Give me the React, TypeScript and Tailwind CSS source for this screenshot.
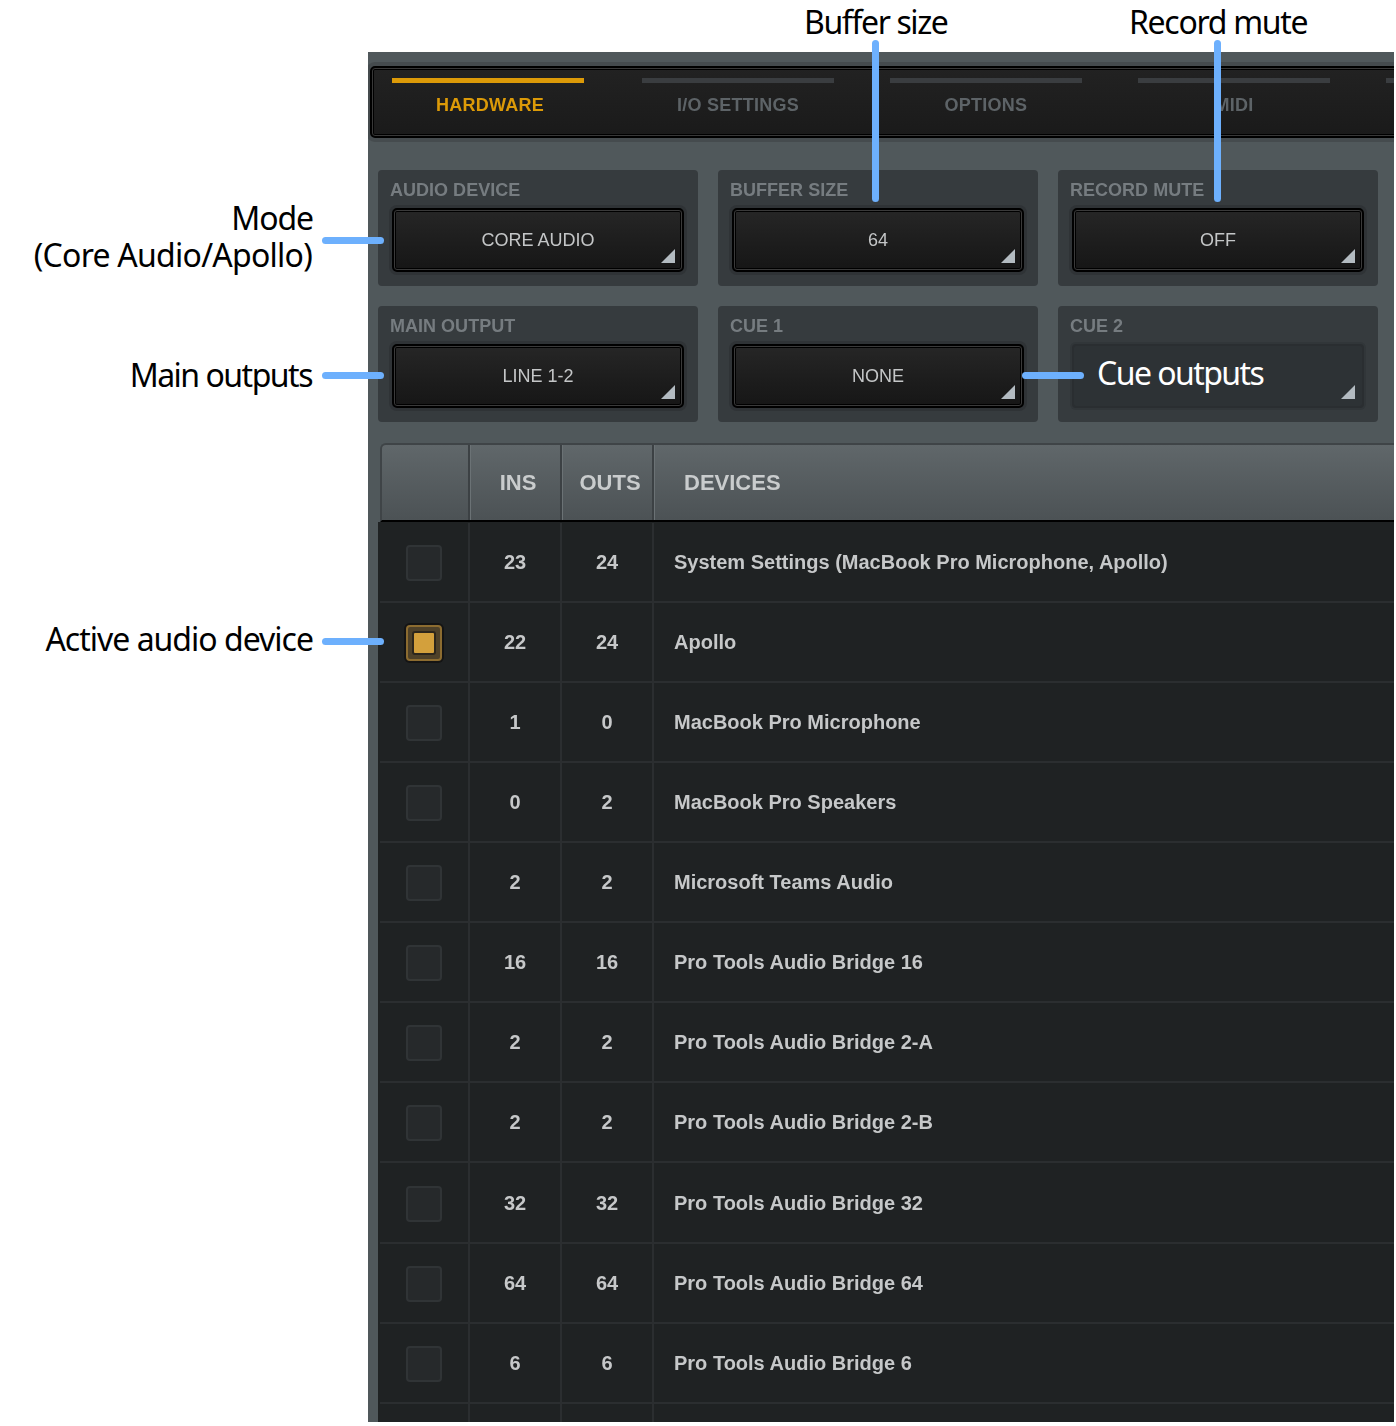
const rows = [
  ["23", "24", "System Settings (MacBook Pro Microphone, Apollo)"],
  ["22", "24", "Apollo"],
  ["1", "0", "MacBook Pro Microphone"],
  ["0", "2", "MacBook Pro Speakers"],
  ["2", "2", "Microsoft Teams Audio"],
  ["16", "16", "Pro Tools Audio Bridge 16"],
  ["2", "2", "Pro Tools Audio Bridge 2-A"],
  ["2", "2", "Pro Tools Audio Bridge 2-B"],
  ["32", "32", "Pro Tools Audio Bridge 32"],
  ["64", "64", "Pro Tools Audio Bridge 64"],
  ["6", "6", "Pro Tools Audio Bridge 6"],
  ["", "", ""],
];

const tabs = ["HARDWARE", "I/O SETTINGS", "OPTIONS", "MIDI", ""];

function Corner() {
  return (
    <svg className="absolute right-[7px] bottom-[7px]" width="14" height="14" viewBox="0 0 14 14">
      <polygon points="14,0 14,14 0,14" fill="#b3bbc1" />
    </svg>
  );
}

function Select({ label, value, faded }: { label: string; value: string; faded?: boolean }) {
  return (
    <div className="w-[320px] h-[116px] shrink-0 rounded-[4px] bg-[#363b3e] px-[12px] pt-[8px]">
      <div className="h-[24px] text-[18px] leading-[24px] font-bold tracking-[0.02px] text-[#767c80]">{label}</div>
      {faded ? (
        <div className="relative mt-[6px] ml-[2px] h-[64px] w-[292px] rounded-[4px] border-2 border-[#2a2e31] bg-[#2d3235] shadow-[0_0_0_2px_#313639] flex items-center justify-center text-[18px] text-[#383d40]">
          {value}
          <Corner />
        </div>
      ) : (
        <div className="relative mt-[6px] ml-[2px] h-[64px] w-[292px] rounded-[5px] border-2 border-black bg-gradient-to-b from-[#262626] to-[#161616] shadow-[0_0_0_3px_#2f3336,inset_0_0_0_1px_#3a3a3a,inset_0_0_0_2px_#000000] flex items-center justify-center text-[18px] text-[#c4c6c7]">
          {value}
          <Corner />
        </div>
      )}
    </div>
  );
}

function Check({ on }: { on: boolean }) {
  if (on) {
    return (
      <div className="w-[36px] h-[36px] rounded-[4px] border-2 border-[#8c6c30] bg-[#4e4129] shadow-[0_0_0_2px_#141414] flex items-center justify-center">
        <div className="w-[24px] h-[24px] rounded-[3px] border-2 border-[#2c261c] bg-[#d3a03c]" />
      </div>
    );
  }
  return <div className="w-[36px] h-[36px] rounded-[4px] border-2 border-[#303436] bg-[#26292b]" />;
}

function Line({ className }: { className: string }) {
  return <div className={"absolute rounded-full bg-[#6db0fd] " + className} />;
}

function Note({ className, children }: { className: string; children: React.ReactNode }) {
  return (
    <div className={"absolute whitespace-nowrap text-[32px] leading-[38px] text-black " + className}>
      {children}
    </div>
  );
}

export default function App() {
  return (
    <div className="relative w-[1394px] h-[1422px] overflow-hidden bg-white font-['Liberation_Sans',Arial,sans-serif]">
      <div className="ml-[368px] mt-[52px] h-[1370px] w-[1026px] overflow-hidden bg-[#50585b]">
        <div className="blur-[0.35px]">
          <div className="relative top-[14px] ml-[2px] w-[1100px] h-[72px] rounded-[5px] border-2 border-black bg-gradient-to-b from-[#222222] to-[#1a1a1a] shadow-[0_0_0_4px_#454b4e,inset_0_0_0_1px_#383838,inset_0_0_0_2px_#000000]">
            <div className="flex pl-[20px] pt-[10px]">
              {tabs.map((t, i) => (
                <div key={i} className={"w-[192px] shrink-0 text-center " + (i === 0 ? "mr-[58px]" : "mr-[56px]")}>
                  <div className={"h-[5px] " + (i === 0 ? "bg-[#dc9a08]" : "bg-[#3a3d40]")} />
                  <div className={"mt-[10px] text-[18px] leading-[24px] font-bold tracking-[0.25px] " + (i === 0 ? "pl-[4px] text-[#dc9a08]" : "text-[#5d6367]")}>{t}</div>
                </div>
              ))}
            </div>
          </div>

          <div className="mt-[46px] ml-[10px] flex flex-col gap-[20px]">
            <div className="flex gap-[20px]">
              <Select label="AUDIO DEVICE" value="CORE AUDIO" />
              <Select label="BUFFER SIZE" value="64" />
              <Select label="RECORD MUTE" value="OFF" />
            </div>
            <div className="flex gap-[20px]">
              <Select label="MAIN OUTPUT" value="LINE 1-2" />
              <Select label="CUE 1" value="NONE" />
              <Select label="CUE 2" value="NONE" faded />
            </div>
          </div>

          <div className="ml-[10px] mt-[21px] w-[1100px]">
            <div className="ml-[2px] flex h-[79px] rounded-tl-[6px] border-t-2 border-l-2 border-[#3f4447] border-b-2 border-b-black bg-gradient-to-b from-[#60676a] to-[#4c5255] text-[22px] font-bold text-[#c9cccd]">
              <div className="w-[88px] shrink-0 border-r-2 border-[#3c4144]" />
              <div className="w-[92px] shrink-0 border-r-2 border-[#3c4144] border-l border-l-[#6b7275] flex items-center justify-center pl-[5px]">INS</div>
              <div className="w-[92px] shrink-0 border-r-2 border-[#3c4144] border-l border-l-[#6b7275] flex items-center justify-center pl-[5px]">OUTS</div>
              <div className="flex-1 border-l border-l-[#6b7275] flex items-center pl-[29px]">DEVICES</div>
            </div>
            <div className="pt-[1px] bg-[#1f2223]">
              {rows.map((r, i) => (
                <div key={i} className={"ml-[2px] flex border-b-2 border-[#2b2e30] text-[20px] font-bold text-[#c6c8c9] " + (i === 8 ? "h-[81px]" : "h-[80px]")}>
                  <div className="w-[90px] shrink-0 border-r-2 border-[#2b2e30] flex items-center justify-center pt-[2px]">
                    {r[2] !== "" && <Check on={i === 1} />}
                  </div>
                  <div className="w-[92px] shrink-0 border-r-2 border-[#2b2e30] flex items-center justify-center">{r[0]}</div>
                  <div className="w-[92px] shrink-0 border-r-2 border-[#2b2e30] flex items-center justify-center">{r[1]}</div>
                  <div className="flex-1 flex items-center pl-[20px]">{r[2]}</div>
                </div>
              ))}
            </div>
          </div>
        </div>
      </div>

      {/* callouts over the screenshot */}
      <div className="font-['Noto_Sans',sans-serif]">
        <Line className="left-[872px] top-[40px] w-[7px] h-[162px]" />
        <Line className="left-[1214px] top-[40px] w-[7px] h-[162px]" />
        <Line className="left-[322px] top-[237px] w-[62px] h-[7px]" />
        <Line className="left-[322px] top-[372px] w-[62px] h-[7px]" />
        <Line className="left-[322px] top-[638px] w-[62px] h-[7px]" />
        <Line className="left-[1022px] top-[372px] w-[62px] h-[7px]" />
        <Note className="left-[804px] top-[3px] tracking-[-1.4px]">Buffer size</Note>
        <Note className="left-[1129px] top-[3px] tracking-[-1.3px]">Record mute</Note>
        <Note className="right-[1081px] top-[199px] text-right tracking-[-1.1px]">Mode</Note>
        <Note className="right-[1082px] top-[236px] text-right tracking-[-0.75px]">(Core Audio/Apollo)</Note>
        <Note className="right-[1082px] top-[356px] text-right tracking-[-1.5px]">Main outputs</Note>
        <Note className="right-[1081px] top-[620px] text-right tracking-[-1px]">Active audio device</Note>
        <Note className="left-[1097px] top-[354px] !text-white tracking-[-1.55px]">Cue outputs</Note>
      </div>
    </div>
  );
}
